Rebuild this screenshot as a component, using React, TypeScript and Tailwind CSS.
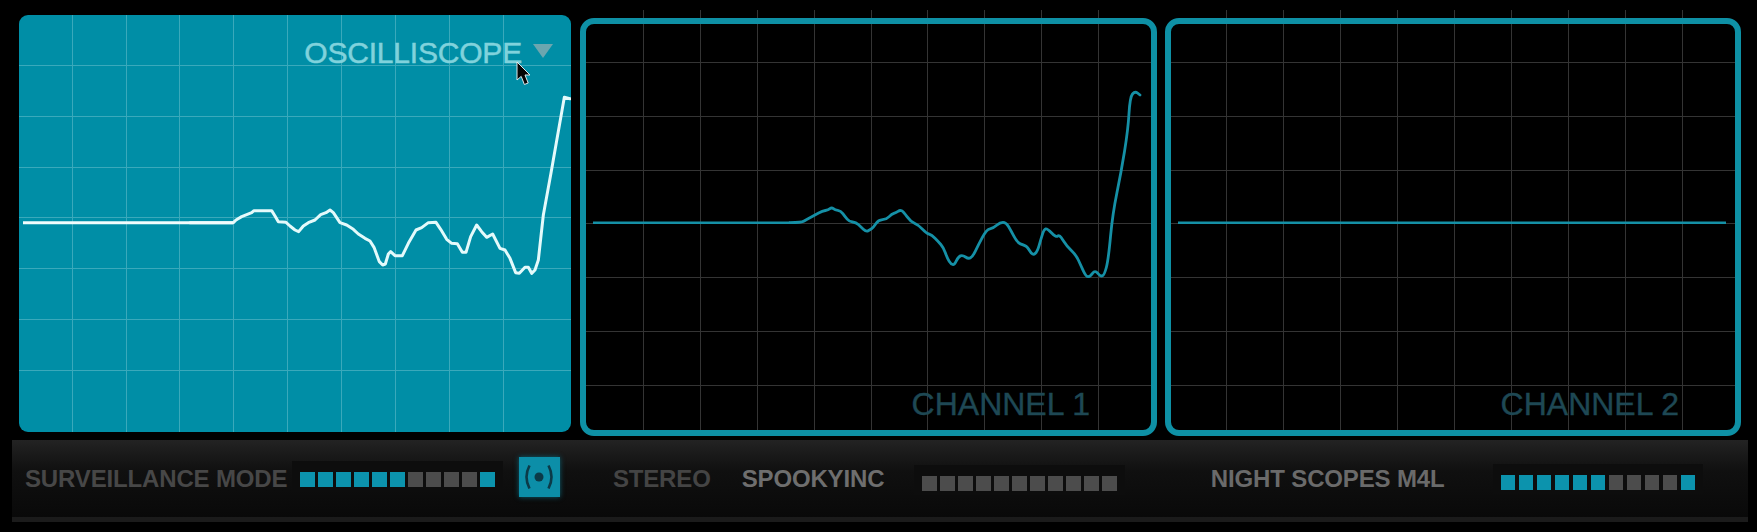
const FONT = "font-['Liberation_Sans',Arial,sans-serif]";

// traces were read off at 3x, relative to an origin just left of where the signal starts
const scopeOne: number[][] = [
  [-30, 98], [100, 98], [108, 90], [125, 80], [140, 74], [155, 68], [162, 62], [215, 62], [225, 78], [235, 95], [258, 97],
  [270, 108], [285, 120], [296, 125], [310, 108], [325, 98], [345, 90], [362, 74], [378, 68], [390, 60], [400, 68],
  [420, 98], [440, 105], [460, 118], [475, 132], [495, 145], [510, 153], [522, 172], [538, 215], [548, 225], [556, 222],
  [565, 192], [572, 185], [585, 197], [607, 197], [625, 160], [648, 120], [665, 113], [685, 98], [708, 97], [722, 118],
  [740, 148], [755, 160], [772, 161], [787, 187], [798, 187], [812, 140], [830, 105], [845, 125], [860, 142], [878, 132],
  [900, 175], [915, 180], [930, 205], [947, 248], [958, 250], [975, 232], [985, 232], [995, 250], [1005, 240], [1015, 210],
  [1030, 75], [1053, -51], [1093, -278], [1110, -274],
];

const scopeTwo: number[][] = [
  [0, 98], [35, 98], [50, 88], [75, 75], [97, 63], [115, 60], [125, 52], [135, 60], [152, 62], [165, 80], [178, 95],
  [198, 97], [212, 110], [228, 125], [240, 120], [250, 112], [265, 90], [290, 88], [305, 72], [318, 68], [330, 60],
  [340, 65], [362, 95], [385, 105], [410, 130], [425, 135], [445, 155], [460, 172], [472, 205], [483, 222], [493, 225],
  [505, 200], [518, 195], [535, 207], [548, 200], [565, 165], [590, 118], [610, 115], [630, 97], [648, 97], [662, 120],
  [682, 158], [700, 165], [712, 170], [728, 197], [742, 185], [752, 150], [762, 118], [772, 115], [798, 143], [808, 133],
  [830, 168], [858, 195], [872, 225], [888, 260], [900, 260], [915, 240], [932, 260], [943, 255], [955, 210], [968, 70],
  [993, -51], [1014, -180], [1020, -279], [1035, -297], [1050, -285],
];

function toPoints(raw: number[][], ox: number, oy: number) {
  return raw.map(([x, y]) => `${ox + x / 3},${oy + y / 3}`).join(" ");
}

// channel trace is rounder than the main one, so run it through midpoints
function toSmoothPath(raw: number[][], ox: number, oy: number) {
  const p = raw.map(([x, y]) => [ox + x / 3, oy + y / 3]);
  let d = `M${p[0][0]} ${p[0][1]}`;
  for (let i = 1; i < p.length - 1; i++) {
    const mx = (p[i][0] + p[i + 1][0]) / 2;
    const my = (p[i][1] + p[i + 1][1]) / 2;
    d += `Q${p[i][0]} ${p[i][1]} ${mx} ${my}`;
  }
  const last = p[p.length - 1];
  return `${d}L${last[0]} ${last[1]}`;
}

function range(start: number, step: number, count: number) {
  return Array.from({ length: count }, (_, i) => Math.round(start + i * step) + 0.5);
}

function Grid({
  xs,
  ys,
  top,
  bottom,
  left,
  right,
  color,
}: {
  xs: number[];
  ys: number[];
  top: number;
  bottom: number;
  left: number;
  right: number;
  color: string;
}) {
  return (
    <g stroke={color} strokeWidth="1">
      {xs.map((x) => (
        <line key={x} x1={x} x2={x} y1={top} y2={bottom} />
      ))}
      {ys.map((y) => (
        <line key={y} x1={left} x2={right} y1={y} y2={y} />
      ))}
    </g>
  );
}

function Cursor() {
  return (
    <svg width="15" height="26" viewBox="0 0 15 26" className="absolute left-[497px] top-[46px]" aria-hidden="true">
      <path d="M1 1V19L5.2 15.4L8.4 23.5L12.2 22L9 14H14Z" fill="#050505" stroke="#dfe8ea" strokeWidth="1" />
    </svg>
  );
}

function MainScope() {
  return (
    <div className="relative flex h-[417px] w-[552px] items-start justify-end overflow-hidden rounded-[9px] bg-[#008ea6] pr-[18px] pt-[23px]">
      <svg viewBox="19 15 552 417" className="absolute inset-0 h-full w-full" fill="none" aria-hidden="true">
        <Grid xs={range(71.6, 53.9, 9)} ys={range(64.7, 50.9, 7)} top={15} bottom={432} left={19} right={571} color="#3aa9bb" />
        <polyline
          points={toPoints(scopeOne, 200, 190)}
          stroke="#e4fafb"
          strokeWidth="3"
          strokeLinejoin="round"
          strokeLinecap="round"
        />
        <line x1="23" x2="233" y1="222.7" y2="222.7" stroke="#f2fdfd" strokeWidth="3" />
      </svg>
      <span className="relative text-[30px] leading-[30px] tracking-[-0.2px] text-[#80d2dc] [-webkit-text-stroke:0.5px_#80d2dc]">
        OSCILLISCOPE
      </span>
      <svg width="20" height="14" viewBox="0 0 20 14" className="relative ml-[11px] mt-[6px]" aria-hidden="true">
        <path d="M0 0H20L10 14Z" fill="#6ca6af" />
      </svg>
      <Cursor />
    </div>
  );
}

function ChannelScope({
  label,
  originX,
  width,
  ml,
  firstLine,
  children,
}: {
  label: string;
  originX: number;
  width: string;
  ml: string;
  firstLine: number;
  children?: React.ReactNode;
}) {
  const w = originX === 580 ? 577 : 576;
  return (
    <div className={`relative mt-[3px] flex h-[418px] items-end justify-end ${width} ${ml}`}>
      <svg
        viewBox={`${originX} 18 ${w} 418`}
        className="absolute inset-0 h-full w-full overflow-visible"
        fill="none"
        aria-hidden="true"
      >
        <Grid
          xs={range(firstLine, 56.95, 9)}
          ys={range(61.7, 53.9, 7)}
          top={10}
          bottom={431}
          left={originX + 6}
          right={originX + w - 6}
          color="#343434"
        />
        {children}
      </svg>
      <div className="absolute inset-0 rounded-[14px] border-[6px] border-[#0e90a5]" />
      <span
        className={`relative mb-[16px] text-[32px] leading-[32px] text-[#1e4854] [-webkit-text-stroke:0.4px_#1e4854] ${originX === 580 ? "mr-[67px]" : "mr-[62px]"}`}
      >
        {label}
      </span>
    </div>
  );
}

function Meter({ lit, className }: { lit: number[]; className: string }) {
  return (
    <div className={`flex gap-[3.5px] bg-[#0d0d0d] px-2 pb-[4px] pt-[11px] ${className}`}>
      {Array.from({ length: 11 }, (_, i) => (
        <span key={i} className={`h-[15px] w-[14.5px] ${lit.includes(i) ? "bg-[#0c93ad]" : "bg-[#4c4c4c]"}`} />
      ))}
    </div>
  );
}

const ON = [0, 1, 2, 3, 4, 5, 10];

export default function App() {
  return (
    <div className={`h-[532px] w-[1757px] overflow-hidden bg-black ${FONT}`}>
      <div className="flex h-[440px] items-start pl-[19px] pt-[15px]">
        <MainScope />
        <ChannelScope label="CHANNEL 1" originX={580} width="w-[577px]" ml="ml-[9px]" firstLine={642.7}>
          <path d={toSmoothPath(scopeTwo, 790, 190)} stroke="#1590a6" strokeWidth="2.8" strokeLinecap="round" />
          <line x1="593" x2="790" y1="222.7" y2="222.7" stroke="#1590a6" strokeWidth="2.4" />
        </ChannelScope>
        <ChannelScope label="CHANNEL 2" originX={1165} width="w-[576px]" ml="ml-[8px]" firstLine={1226.3}>
          <line x1="1178" x2="1726" y1="222.7" y2="222.7" stroke="#1590a6" strokeWidth="2.4" />
        </ChannelScope>
      </div>

      <footer className="ml-3 w-[1736px]">
        <div className="flex h-[77px] items-center bg-gradient-to-b from-[#232323] from-0% via-[#101010] via-40% to-[#090909] pl-[13px] text-[24px] font-bold leading-[24px] tracking-[-0.15px]">
          <span className="text-[#474747]">SURVEILLANCE MODE</span>
          <Meter lit={ON} className="ml-[5px] -mt-[5px]" />
          <button className="ml-[16px] -mt-[3px] flex h-[40px] w-[41px] items-center justify-center bg-[#0c8ea8] shadow-[0_0_5px_#0c5f70]">
            <svg width="32" height="26" viewBox="0 0 32 26" fill="none" aria-hidden="true">
              <path d="M6.5 1.5Q0.5 13 6.5 24.5M25.5 1.5Q31.5 13 25.5 24.5" stroke="#0b3a48" strokeWidth="2.6" />
              <circle cx="16" cy="13" r="4.5" fill="#0b3a48" />
            </svg>
          </button>
          <span className="ml-[53px] text-[#444444]">STEREO</span>
          <span className="ml-[31px] text-[#6e6e6e]">SPOOKYINC</span>
          <Meter lit={[]} className="ml-[30px] mt-[2px]" />
          <span className="ml-[86px] text-[#6a6a6a]">NIGHT SCOPES M4L</span>
          <Meter lit={ON} className="ml-[48px] mt-[1px]" />
        </div>
        <div className="h-[5px] bg-[#1b1b1b]" />
      </footer>
    </div>
  );
}
